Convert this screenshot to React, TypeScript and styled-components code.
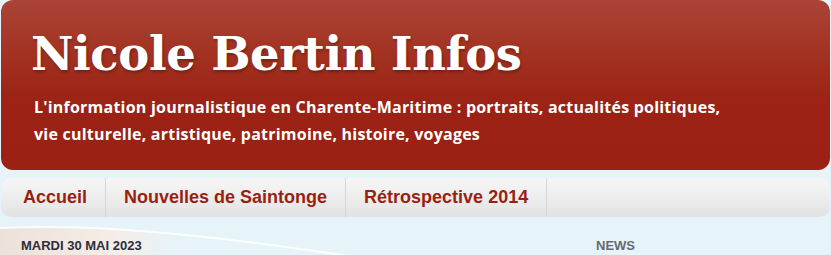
import React from 'react';
import styled, { createGlobalStyle } from 'styled-components';

const GlobalStyle = createGlobalStyle`
    html, body {
        margin: 0;
        padding: 0;
        background: #e6f3f9;
    }
    body {
        font-family: 'Liberation Sans', Arial, sans-serif;
    }
`;

const Page = styled.div`
    position: relative;
    width: 831px;
    height: 255px;
    overflow: hidden;
    background: #e6f3f9;
`;

// decorative body swoosh behind the posts
const Swoosh = styled.svg`
    position: absolute;
    left: 0;
    top: 224px;
    width: 831px;
    height: 40px;
`;

const Content = styled.div`
    position: relative;
    padding: 0 1px;
`;

const Header = styled.header`
    height: 170px;
    border-radius: 12px;
    background: linear-gradient(#aa4437 0%, #a2301f 35%, #9b2214 60%, #9a2113 100%);
    padding: 19px 0 0 30px;
    box-sizing: border-box;
    color: #fff;
`;

const Title = styled.h1`
    margin: 0;
    font-family: 'DejaVu Serif', Georgia, serif;
    font-weight: bold;
    font-size: 46.5px;
    line-height: 70px;
    letter-spacing: -0.4px;
    text-shadow: 1px 2px 3px rgba(0, 0, 0, 0.3);
`;

const Tagline = styled.p`
    margin: 5px 0 0 3px;
    font-family: 'Open Sans', 'Trebuchet MS', sans-serif;
    font-weight: bold;
    font-size: 16px;
    line-height: 27px;
    letter-spacing: 0.22px;
    max-width: 700px;
`;

const Nav = styled.nav`
    margin-top: 8px;
    height: 39px;
    padding-left: 4px;
    border-radius: 10px;
    background: linear-gradient(#f6f6f6 0%, #ececec 55%, #e2e2e2 100%);
    display: flex;
    align-items: stretch;
`;

const Tab = styled.a`
    display: flex;
    align-items: center;
    padding: 0 18px;
    border-right: 1px solid #d6d6d6;
    color: #9b1f11;
    font-weight: bold;
    font-size: 18px;
    text-decoration: none;
`;

const Columns = styled.div`
    display: grid;
    grid-template-columns: 575px 1fr;
    padding: 21px 0 0 20px;
`;

const DateHeader = styled.h2`
    margin: 0;
    font-size: 13px;
    font-weight: bold;
    color: #2c2e3a;
    line-height: 15px;
`;

const SideTitle = styled.h2`
    margin: 0;
    font-size: 13px;
    font-weight: bold;
    color: #666a74;
    line-height: 15px;
`;

export default function App() {
    const tabs = ['Accueil', 'Nouvelles de Saintonge', 'Rétrospective 2014'];
    return (
        <Page>
            <GlobalStyle />
            <Swoosh viewBox="0 0 831 40" preserveAspectRatio="none">
                <defs>
                    <linearGradient id="sw" x1="0" y1="0" x2="1" y2="0">
                        <stop offset="0" stopColor="#ede2da" />
                        <stop offset="0.3" stopColor="#f5ede7" />
                        <stop offset="0.5" stopColor="#e6f3f9" stopOpacity="0" />
                    </linearGradient>
                </defs>
                <path d="M0 4 C 90 0, 200 8, 400 40 L 0 40 Z" fill="url(#sw)" />
                <path d="M0 4 C 90 0, 200 8, 400 40" fill="none" stroke="#ffffff" strokeWidth="2" opacity="0.85" />
            </Swoosh>
            <Content>
                <Header>
                    <Title>Nicole Bertin Infos</Title>
                    <Tagline>
                        L'information journalistique en Charente-Maritime : portraits, actualités politiques, vie
                        culturelle, artistique, patrimoine, histoire, voyages
                    </Tagline>
                </Header>
                <Nav>
                    {tabs.map((t) => (
                        <Tab key={t} href="#">
                            {t}
                        </Tab>
                    ))}
                </Nav>
                <Columns>
                    <DateHeader>MARDI 30 MAI 2023</DateHeader>
                    <SideTitle>NEWS</SideTitle>
                </Columns>
            </Content>
        </Page>
    );
}
